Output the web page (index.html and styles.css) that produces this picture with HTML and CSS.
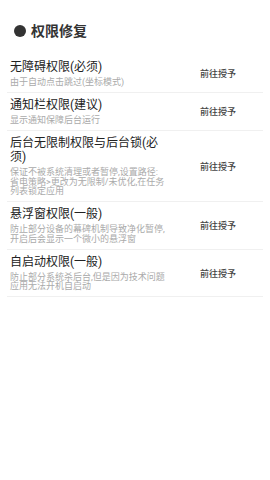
FILE: index.html
```html
<!DOCTYPE html>
<html lang="zh-CN">
<head>
    <meta charset="UTF-8">
    <meta name="viewport" content="width=device-width, initial-scale=1.0">
    <title>权限修复</title>

    <link rel="stylesheet" href="styles.css">
</head>
<body>

    <div class="header">
        <span class="dot"></span>
        <h1 class="header-title">权限修复</h1>
    </div>

    <div class="perm-list">
        <div class="perm-item">
            <div class="perm-info">
                <div class="perm-name">无障碍权限(必须)</div>
                <div class="perm-desc">由于自动点击跳过(坐标模式)</div>
            </div>
            <a class="perm-btn">前往授予</a>
        </div>

        <div class="perm-item">
            <div class="perm-info">
                <div class="perm-name">通知栏权限(建议)</div>
                <div class="perm-desc">显示通知保障后台运行</div>
            </div>
            <a class="perm-btn">前往授予</a>
        </div>

        <div class="perm-item">
            <div class="perm-info">
                <div class="perm-name">后台无限制权限与后台锁(必须)</div>
                <div class="perm-desc">保证不被系统清理或者暂停,设置路径:省电策略&gt;更改为无限制/未优化,在任务列表锁定应用</div>
            </div>
            <a class="perm-btn">前往授予</a>
        </div>

        <div class="perm-item">
            <div class="perm-info">
                <div class="perm-name">悬浮窗权限(一般)</div>
                <div class="perm-desc">防止部分设备的幕碑机制导致净化暂停,开启后会显示一个微小的悬浮窗</div>
            </div>
            <a class="perm-btn">前往授予</a>
        </div>

        <div class="perm-item">
            <div class="perm-info">
                <div class="perm-name">自启动权限(一般)</div>
                <div class="perm-desc">防止部分系统杀后台,但是因为技术问题应用无法开机自启动</div>
            </div>
            <a class="perm-btn">前往授予</a>
        </div>
    </div>

</body>
</html>
```

FILE: styles.css
```css
body {
    margin: 0px;
    background-color: white;
    font-family: Roboto, 'Noto Sans CJK SC', sans-serif;
    color: #222;
}

.header {
    display: flex;
    align-items: center;
    padding: 20px 14px 0 14px;
    height: 21px;
}

.dot {
    width: 12px;
    height: 12px;
    border-radius: 50%;
    background-color: #333;
    margin-right: 5px;
}

.header-title {
    margin: 0;
    font-size: 14px;
    line-height: 20px;
    font-weight: bold;
    color: #333;
}

.perm-list {
    margin: 14px 7px 0 7px;
}

.perm-item {
    display: grid;
    grid-template-columns: 158px 1fr;
    align-items: center;
    padding: 5px 0 4.5px 0;
    border-bottom: 1px solid #f0f0f0;
}

.perm-info {
    padding-left: 3px;
}

.perm-name {
    font-size: 12px;
    line-height: 14px;
    color: #222;
}

.perm-desc {
    margin-top: 4px;
    font-size: 9px;
    line-height: 9.5px;
    color: #aaa;
}

.perm-btn {
    padding-left: 8px;
    text-align: center;
    font-size: 9px;
    font-weight: 500;
    color: #444;
    cursor: pointer;
}
```
